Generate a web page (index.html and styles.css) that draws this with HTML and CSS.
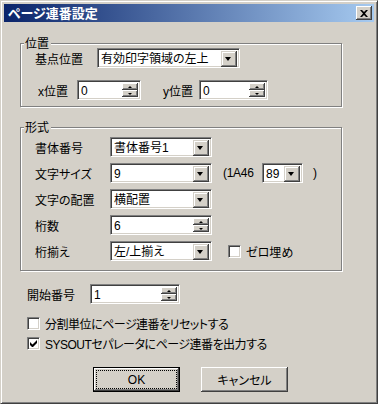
FILE: index.html
```html
<!DOCTYPE html>
<html lang="ja">
<head>
    <meta charset="UTF-8">
    <title>ページ連番設定</title>
    <link rel="stylesheet" href="styles.css">
</head>
<body>

<div class="dialog">
    <div class="titlebar">
        <span class="title">ページ連番設定</span>
        <span class="close">
            <svg width="8" height="7" viewBox="0 0 8 7"><path d="M0 0h2l2 2 2-2h2L5 3.5 8 7H6L4 5 2 7H0l3-3.5z" fill="#000"/></svg>
        </span>
    </div>

    <div class="content">
        <!-- 位置 -->
        <div class="group group-pos">
            <span class="legend">位置</span>
            <div class="row row-base">
                <span class="label" style="width:62px">基点位置</span>
                <div class="combo" style="width:143px"><span class="value">有効印字領域の左上</span><span class="drop"></span></div>
            </div>
            <div class="row row-xy">
                <span class="label" style="width:39px">x位置</span>
                <div class="spin" style="width:64px"><span class="value">0</span><span class="arrows"><i class="up"></i><i class="down"></i></span></div>
                <span class="label ylabel" style="width:36px">y位置</span>
                <div class="spin" style="width:69px"><span class="value">0</span><span class="arrows"><i class="up"></i><i class="down"></i></span></div>
            </div>
        </div>

        <!-- 形式 -->
        <div class="group group-fmt">
            <span class="legend">形式</span>
            <div class="row">
                <span class="label" style="width:75px">書体番号</span>
                <div class="combo" style="width:102px"><span class="value">書体番号1</span><span class="drop"></span></div>
            </div>
            <div class="row">
                <span class="label" style="width:75px">文字サイズ</span>
                <div class="combo" style="width:102px"><span class="value">9</span><span class="drop"></span></div>
                <span class="paren">(1A46</span>
                <div class="combo" style="width:41px"><span class="value">89</span><span class="drop"></span></div>
                <span class="paren-end">)</span>
            </div>
            <div class="row">
                <span class="label" style="width:75px">文字の配置</span>
                <div class="combo" style="width:102px"><span class="value">横配置</span><span class="drop"></span></div>
            </div>
            <div class="row">
                <span class="label" style="width:75px">桁数</span>
                <div class="spin" style="width:102px"><span class="value">6</span><span class="arrows"><i class="up"></i><i class="down"></i></span></div>
            </div>
            <div class="row">
                <span class="label" style="width:75px">桁揃え</span>
                <div class="combo" style="width:102px"><span class="value">左/上揃え</span><span class="drop"></span></div>
                <span class="check zero"></span>
                <span class="check-text">ゼロ埋め</span>
            </div>
        </div>

        <div class="row row-start">
            <span class="label" style="width:63px">開始番号</span>
            <div class="spin" style="width:90px"><span class="value">1</span><span class="arrows"><i class="up"></i><i class="down"></i></span></div>
        </div>

        <div class="row row-check">
            <span class="check"></span>
            <span class="check-text tight">分割単位にページ連番をリセットする</span>
        </div>
        <div class="row row-check">
            <span class="check checked">
                <svg width="7" height="7" viewBox="0 0 7 7"><path d="M0 2v3l2 2h1l4-4V0L2.5 4.5z" fill="#000"/></svg>
            </span>
            <span class="check-text tight">SYSOUTセパレータにページ連番を出力する</span>
        </div>

        <div class="buttons">
            <div class="btn default"><span class="focus">OK</span></div>
            <div class="btn">キャンセル</div>
        </div>
    </div>
</div>

</body>
</html>
```

FILE: styles.css
```css
/* Dialog frame */
body {
    margin: 0;
    background-color: #fff;
    font-family: "Liberation Sans", "Noto Sans CJK JP", sans-serif;
    font-size: 12px;
    font-feature-settings: "palt";
    color: #000;
}

.dialog {
    width: 378px;
    height: 404px;
    box-sizing: border-box;
    padding: 3px;
    background-color: #d4d0c8;
    border: 1px solid;
    border-color: #d4d0c8 #404040 #404040 #d4d0c8;
    box-shadow: inset 1px 1px #fff, inset -1px -1px #808080;
}

.titlebar {
    height: 18px;
    display: flex;
    align-items: center;
    justify-content: space-between;
    padding: 0 2px 0 4px;
    background: linear-gradient(to right, #0a246a, #a6caf0);
}

.title {
    color: #fff;
    font-family: "Noto Sans CJK JP", sans-serif;
    font-weight: bold;
    font-size: 13px;
    line-height: 18px;
}

.close {
    width: 16px;
    height: 14px;
    display: flex;
    align-items: center;
    justify-content: center;
    background-color: #d4d0c8;
    box-shadow: inset -1px -1px #404040, inset 1px 1px #fff, inset -2px -2px #808080;
}

.content {
    padding: 21px 0 0 16px;
}

/* Group boxes */
.group {
    position: relative;
    width: 322px;
    box-sizing: border-box;
    border: 1px solid #808080;
    box-shadow: 1px 1px 0 #fff, inset 1px 1px 0 #fff;
}

.legend {
    position: absolute;
    left: 3px;
    top: -8px;
    padding: 0 2px 0 1px;
    line-height: 14px;
    background-color: #d4d0c8;
    font-family: "Noto Sans CJK JP", sans-serif;
}

.group-pos {
    padding: 4px 0 6px 14px;
}

.group-pos .row-xy {
    margin-top: 12px;
    padding-left: 3px;
}

.group-fmt {
    margin-top: 20px;
    padding: 9px 0 9px 14px;
}

.group-fmt .row + .row {
    margin-top: 6px;
}

/* Rows and labels */
.row {
    display: flex;
    align-items: center;
    height: 20px;
}

.label {
    flex-shrink: 0;
}

.ylabel {
    margin-left: 22px;
}

.paren {
    margin-left: 11px;
    width: 39px;
    letter-spacing: -0.3px;
}

.paren-end {
    margin-left: 10px;
}

/* Combo box */
.combo, .spin {
    display: flex;
    height: 20px;
    box-sizing: border-box;
    padding: 2px;
    background-color: #fff;
    border: 1px solid;
    border-color: #808080 #fff #fff #808080;
    box-shadow: inset 1px 1px #404040, inset -1px -1px #d4d0c8;
}

.value {
    flex: 1;
    padding-left: 1px;
    line-height: 16px;
    white-space: nowrap;
    overflow: hidden;
}

.drop {
    width: 16px;
    height: 16px;
    position: relative;
    background-color: #d4d0c8;
    box-shadow: inset -1px -1px #404040, inset 1px 1px #d4d0c8, inset -2px -2px #808080, inset 2px 2px #fff;
}

.drop::after {
    content: "";
    position: absolute;
    left: 4px;
    top: 6px;
    border-left: 3.5px solid transparent;
    border-right: 3.5px solid transparent;
    border-top: 4px solid #000;
}

/* Spin box */
.arrows {
    width: 16px;
    display: flex;
    flex-direction: column;
}

.arrows i {
    flex: 1;
    position: relative;
    background-color: #d4d0c8;
    box-shadow: inset -1px -1px #404040, inset 1px 1px #fff, inset -2px -2px #808080;
}

.arrows i::after {
    content: "";
    position: absolute;
    left: 6px;
    border-left: 2px solid transparent;
    border-right: 2px solid transparent;
}

.arrows .up::after {
    top: 3px;
    border-bottom: 2px solid #000;
}

.arrows .down::after {
    top: 3px;
    border-top: 2px solid #000;
}

/* Checkbox */
.check {
    width: 13px;
    height: 13px;
    flex-shrink: 0;
    box-sizing: border-box;
    display: flex;
    align-items: center;
    justify-content: center;
    background-color: #fff;
    border: 1px solid;
    border-color: #808080 #fff #fff #808080;
    box-shadow: inset 1px 1px #404040, inset -1px -1px #d4d0c8;
}

.check-text {
    margin-left: 5px;
    white-space: nowrap;
}

.check-text.tight {
    letter-spacing: -0.5px;
}

.zero {
    margin-left: 16px;
}

.row-start {
    margin-top: 13px;
    padding-left: 7px;
}

.row-check {
    padding-left: 7px;
    margin-top: 0;
}

.row-start + .row-check {
    margin-top: 9px;
}

/* Buttons */
.buttons {
    display: flex;
    gap: 21px;
    margin: 14px 0 0 73px;
}

.btn {
    width: 87px;
    height: 25px;
    box-sizing: border-box;
    display: flex;
    align-items: center;
    justify-content: center;
    background-color: #d4d0c8;
    box-shadow: inset -1px -1px #404040, inset 1px 1px #fff, inset -2px -2px #808080;
}

.btn.default {
    border: 1px solid #000;
    padding: 3px;
}

.focus {
    flex: 1;
    align-self: stretch;
    display: flex;
    align-items: center;
    justify-content: center;
    outline: 1px dotted #000;
}
```
